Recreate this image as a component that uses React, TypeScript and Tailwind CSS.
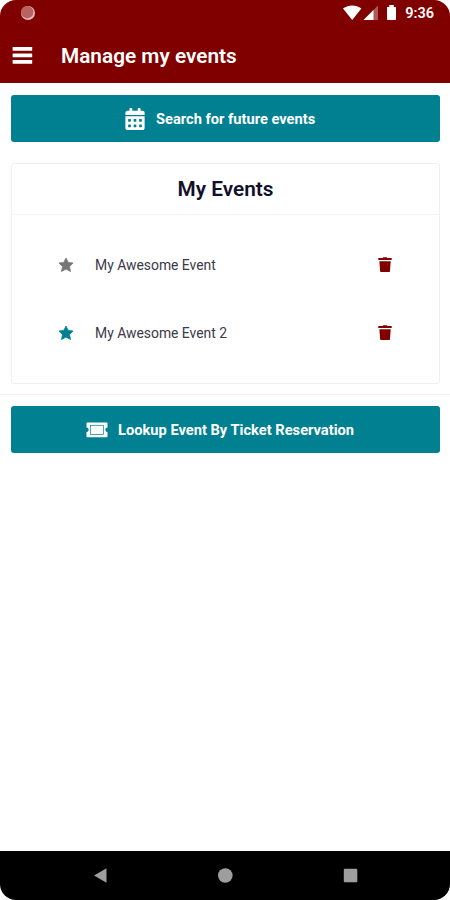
import { useState } from 'react'
import { FaCalendarAlt } from 'react-icons/fa'

type EventItem = {
  id: number
  name: string
  starred: boolean
}

const EVENTS: EventItem[] = [
  { id: 1, name: 'My Awesome Event', starred: false },
  { id: 2, name: 'My Awesome Event 2', starred: true },
]

export default function App() {
  const [events, setEvents] = useState(EVENTS)

  function select(id: number) {
    setEvents((list) => list.map((e) => ({ ...e, starred: e.id === id })))
  }

  function remove(id: number) {
    setEvents((list) => list.filter((e) => e.id !== id))
  }

  return (
    <div className="h-[900px] w-[450px] overflow-hidden bg-white font-['Roboto',sans-serif]">
      <div className="flex h-full flex-col overflow-hidden rounded-[16px] bg-white">
        <header className="h-[83px] shrink-0 bg-[#800000] text-white">
          <StatusBar />
          <div className="flex h-[57px] items-center pt-0.5 pl-3">
            <button type="button" aria-label="Menu" className="w-[49px]">
              <MenuIcon />
            </button>
            <h1 className="text-[20.8px] leading-6 font-semibold whitespace-nowrap">Manage my events</h1>
          </div>
        </header>

        <main className="flex flex-1 flex-col">
          <div className="pt-3 pr-[10px] pl-[11px]">
            <button
              type="button"
              className="flex h-[47px] w-full items-center rounded-[3px] bg-[#008091] pl-[114px] text-[14.67px] font-bold whitespace-nowrap text-white"
            >
              <FaCalendarAlt className="mr-[11px] h-[22px] w-5 shrink-0" />
              <span className="pt-px">Search for future events</span>
            </button>

            <section className="mt-[21px] h-[221px] rounded-[3px] border border-[#f0f0f2]">
              <h2 className="flex h-[51px] items-center justify-center border-b border-[#f3f3f5] pt-px text-[20.8px] font-semibold text-[#10102a]">
                My Events
              </h2>
              <ul className="pt-4">
                {events.map((event) => (
                  <EventRow
                    key={event.id}
                    event={event}
                    onSelect={() => select(event.id)}
                    onRemove={() => remove(event.id)}
                  />
                ))}
              </ul>
            </section>
          </div>

          <div className="mt-[10px] border-t border-[#f3f3f5] pt-[11px] pr-[10px] pl-[11px]">
            <button
              type="button"
              className="flex h-[47px] w-full items-center rounded-[3px] bg-[#008091] pl-[75px] text-[14.67px] font-bold whitespace-nowrap text-white"
            >
              <TicketIcon />
              <span className="pt-px">Lookup Event By Ticket Reservation</span>
            </button>
          </div>
        </main>

        <NavigationBar />
      </div>
    </div>
  )
}

function EventRow({
  event,
  onSelect,
  onRemove,
}: {
  event: EventItem
  onSelect: () => void
  onRemove: () => void
}) {
  return (
    <li className="flex h-[68px] items-center pr-[47px] pl-[46px]">
      <button
        type="button"
        aria-label="Select event"
        onClick={onSelect}
        className={event.starred ? 'text-[#008091]' : 'text-[#777777]'}
      >
        <StarIcon />
      </button>
      <span className="ml-[21px] flex-1 text-[13.9px] text-[#3a3a48]">{event.name}</span>
      <button type="button" aria-label="Delete event" onClick={onRemove} className="text-[#800000]">
        <TrashIcon />
      </button>
    </li>
  )
}

function MenuIcon() {
  return (
    <svg width="21" height="20" viewBox="0 0 21 20" fill="currentColor" aria-hidden="true">
      <rect x="0.6" y="1" width="19.6" height="3.8" rx="0.6" />
      <rect x="0.6" y="7.5" width="19.6" height="3.8" rx="0.6" />
      <rect x="0.6" y="14" width="19.6" height="3.8" rx="0.6" />
    </svg>
  )
}

function StarIcon() {
  return (
    <svg width="16" height="17" viewBox="0 0 16 17" fill="currentColor" aria-hidden="true">
      <path
        d="M8 1 10.2 5.4 15.1 6 11.5 9.5 12.5 14.5 8 12.1 3.5 14.5 4.5 9.5.9 6 5.8 5.4Z"
        stroke="currentColor"
        strokeWidth="0.8"
        strokeLinejoin="round"
      />
    </svg>
  )
}

function TrashIcon() {
  return (
    <svg width="14" height="16" viewBox="0 0 14 16" fill="currentColor" aria-hidden="true">
      <path d="M.3 1H4.6L5.3.2H8.7L9.4 1H13.7V3.1H.3Z" />
      <path d="M1.4 4.2H12.7L12 14.3C12 14.8 11.6 15.1 11.1 15.1H3C2.5 15.1 2.1 14.8 2.1 14.3Z" />
    </svg>
  )
}

function TicketIcon() {
  return (
    <svg width="22" height="16" viewBox="0 0 22 16" className="mr-[10px] shrink-0" aria-hidden="true">
      <path
        d="M1.5.5H20.5C21.1.5 21.5.9 21.5 1.5V5.6A2.2 2.2 0 0 0 21.5 10V14.2C21.5 14.8 21.1 15.2 20.5 15.2H1.5C.9 15.2.5 14.8.5 14.2V10A2.2 2.2 0 0 0 .5 5.6V1.5C.5.9.9.5 1.5.5Z"
        fill="#fff"
      />
      <rect x="4.4" y="3.3" width="13.2" height="9.1" fill="none" stroke="#008091" strokeWidth="0.7" />
    </svg>
  )
}

function StatusBar() {
  return (
    <div className="flex h-[26px] items-center pr-4 pl-5">
      <svg width="16" height="16" viewBox="0 0 16 16" aria-hidden="true">
        <circle cx="8" cy="8" r="7" fill="#e5bcbc" />
        <circle cx="7.2" cy="7.2" r="6.2" fill="#b86262" />
      </svg>
      <div className="flex-1" />
      <svg width="56" height="18" viewBox="0 0 56 18" aria-hidden="true">
        <path d="M0 4.6C5.5.4 12.9.4 18.4 4.6L9.2 16Z" fill="#fff" />
        <path d="M35 1.5V16H20.5Z" fill="#fff" opacity="0.35" />
        <path d="M30.5 6V16H20.5Z" fill="#fff" />
        <path d="M44 3h2.3V1h4.5v2H53v12.2c0 .5-.4.8-.8.8h-7.4c-.4 0-.8-.3-.8-.8Z" fill="#fff" />
      </svg>
      <span className="ml-[6px] pt-0.5 text-[14.5px] leading-4 font-semibold">9:36</span>
    </div>
  )
}

function NavigationBar() {
  return (
    <nav className="h-[49px] shrink-0 bg-black">
      <svg width="450" height="49" viewBox="0 0 450 49" fill="#9e9e9e" aria-hidden="true">
        <path d="M94 24.5 106.5 17.2V31.8Z" />
        <circle cx="225.3" cy="24.5" r="7.3" />
        <rect x="343.8" y="17.8" width="13.5" height="13.5" rx="1" />
      </svg>
    </nav>
  )
}
